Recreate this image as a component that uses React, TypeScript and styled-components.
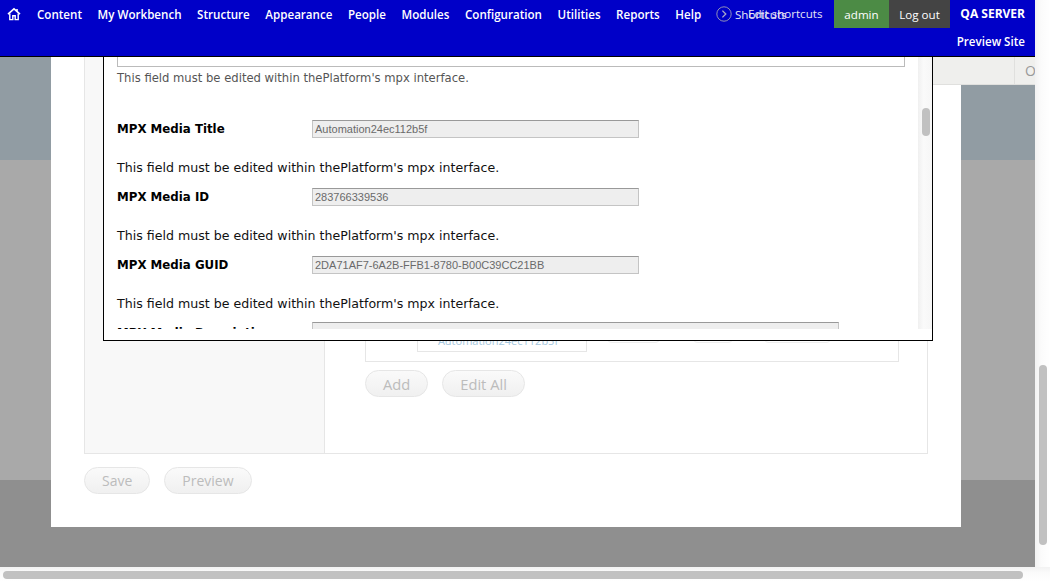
import styled, { createGlobalStyle } from 'styled-components';

const GlobalStyle = createGlobalStyle`
  html, body {
    margin: 0;
    padding: 0;
    height: 582px;
    overflow: hidden;
    background: #fff;
  }
`;

const NAV_ITEMS = [
  'Content',
  'My Workbench',
  'Structure',
  'Appearance',
  'People',
  'Modules',
  'Configuration',
  'Utilities',
  'Reports',
  'Help'
];

const MEDIA_FIELDS = [
  { label: 'MPX Media Title', value: 'Automation24ec112b5f' },
  { label: 'MPX Media ID', value: '283766339536' },
  { label: 'MPX Media GUID', value: '2DA71AF7-6A2B-FFB1-8780-B00C39CC21BB' }
];

const HELP_TEXT = "This field must be edited within thePlatform's mpx interface.";

function App() {
  return (
    <Frame>
      <GlobalStyle />
      <Main>
        <Viewport>
          <Toolbar>
            <HomeLink aria-label="Home">
              <svg width="14" height="14" viewBox="0 0 14 14" fill="none">
                <path d="M10 2v2.6" stroke="#fff" strokeWidth="1.6" />
                <path d="M1 7.2 7 1.8l6 5.4" stroke="#fff" strokeWidth="1.6" />
                <path d="M2.8 6.6V12.6H5.8V8.8H8.2V12.6H11.2V6.6" stroke="#fff" strokeWidth="1.4" />
              </svg>
            </HomeLink>
            <Nav>
              {NAV_ITEMS.map((item) => (
                <NavItem key={item}>{item}</NavItem>
              ))}
            </Nav>
            <Shortcuts>
              <svg width="16" height="16" viewBox="0 0 16 16" fill="none">
                <circle cx="8" cy="8" r="7.2" stroke="#8f8fb8" strokeWidth="1" />
                <path d="M6.4 4.6 9.8 8l-3.4 3.4" stroke="#a9a9c8" strokeWidth="1.3" />
              </svg>
              <ShortcutsLabel>Shortcuts</ShortcutsLabel>
              <EditShortcuts>Edit shortcuts</EditShortcuts>
            </Shortcuts>
            <UserBlock>
              <UserTab $bg="#4c8b45" $w={55}>admin</UserTab>
              <UserTab $bg="#444444" $w={61}>Log out</UserTab>
            </UserBlock>
            <ServerBlock>
              <ServerName>QA SERVER</ServerName>
              <PreviewSite>Preview Site</PreviewSite>
            </ServerBlock>
          </Toolbar>

          <Page>
            <Sheet>
              <TabStrip>
                <TabFiller />
                <TabLabel>O</TabLabel>
              </TabStrip>
              <FormPanel>
                <SideColumn />
                <MainColumn>
                  <ItemBox>
                    <ItemCard>Automation24ec112b5f</ItemCard>
                    <CardAction $w={55} $gap={19} />
                    <CardAction $w={42} $gap={31} />
                    <CardAction $w={69} $gap={29} />
                  </ItemBox>
                  <ButtonRow>
                    <PillButton $size={14.7}>Add</PillButton>
                    <PillButton $size={14.7}>Edit All</PillButton>
                  </ButtonRow>
                </MainColumn>
              </FormPanel>
              <FormActions>
                <PillButton>Save</PillButton>
                <PillButton>Preview</PillButton>
              </FormActions>
            </Sheet>
          </Page>

          <Modal>
            <ModalScroll>
              <ModalBody>
                <EmptyBox />
                <MutedHelp>{HELP_TEXT}</MutedHelp>
                {MEDIA_FIELDS.map((field) => (
                  <FieldBlock key={field.label}>
                    <FieldRow>
                      <FieldLabel>{field.label}</FieldLabel>
                      <ReadOnlyInput>{field.value}</ReadOnlyInput>
                    </FieldRow>
                    <HelpText>{HELP_TEXT}</HelpText>
                  </FieldBlock>
                ))}
                <LastFieldRow>
                  <DescriptionLabel>MPX Media Description</DescriptionLabel>
                  <ReadOnlyInput $wide />
                </LastFieldRow>
              </ModalBody>
              <ModalScrollbar>
                <ModalThumb />
              </ModalScrollbar>
            </ModalScroll>
          </Modal>
        </Viewport>

        <VerticalTrack>
          <VerticalThumb />
        </VerticalTrack>
      </Main>
      <HorizontalTrack>
        <HorizontalThumb />
      </HorizontalTrack>
    </Frame>
  );
}

export default App;

const Frame = styled.div`
  width: 1050px;
  height: 582px;
  display: flex;
  flex-direction: column;
  overflow: hidden;
`;

const Main = styled.div`
  flex: 1;
  min-height: 0;
  display: flex;
`;

const Viewport = styled.div`
  position: relative;
  width: 1035px;
  display: flex;
  flex-direction: column;
  overflow: hidden;
`;

const Toolbar = styled.header`
  position: relative;
  z-index: 3;
  height: 56px;
  flex: none;
  display: flex;
  align-items: flex-start;
  background: #0000c8;
  border-bottom: 1px solid #000;
  font-family: 'Open Sans', sans-serif;
  font-size: 11.6px;
  font-weight: 600;
  color: #fff;
`;

const HomeLink = styled.div`
  width: 37px;
  height: 28px;
  flex: none;
  display: flex;
  align-items: center;
  padding-left: 7px;
  box-sizing: border-box;
`;

const Nav = styled.nav`
  display: flex;
  gap: 15.55px;
  width: 664px;
  flex: none;
  height: 28px;
  align-items: center;
`;

const NavItem = styled.span`
  white-space: nowrap;
`;

const Shortcuts = styled.div`
  position: relative;
  margin-left: 15px;
  width: 118px;
  flex: none;
  height: 28px;
  display: flex;
  align-items: center;
  gap: 3px;
  font-weight: 400;
  color: #e4e4f4;
`;

const ShortcutsLabel = styled.span`
  white-space: nowrap;
`;

const EditShortcuts = styled.span`
  position: absolute;
  left: 32px;
  top: 6px;
  white-space: nowrap;
`;

const UserBlock = styled.div`
  display: flex;
  flex: none;
  font-weight: 400;
`;

const UserTab = styled.div<{ $bg: string; $w: number }>`
  width: ${(p) => p.$w}px;
  height: 28px;
  display: flex;
  align-items: center;
  justify-content: center;
  background: ${(p) => p.$bg};
`;

const ServerBlock = styled.div`
  flex: 1;
  height: 56px;
  padding-right: 10px;
  display: flex;
  flex-direction: column;
  align-items: flex-end;
  white-space: nowrap;
`;

const ServerName = styled.div`
  height: 28px;
  line-height: 28px;
  font-size: 12px;
  font-weight: 700;
`;

const PreviewSite = styled.div`
  height: 28px;
  line-height: 28px;
`;

const Page = styled.main`
  flex: 1;
  min-height: 0;
  background: linear-gradient(
    #919ca3 0,
    #919ca3 103px,
    #a9a9a9 103px,
    #a9a9a9 423px,
    #8f8f8f 423px
  );
`;

const Sheet = styled.div`
  position: relative;
  width: 910px;
  height: 470px;
  margin-left: 51px;
  background: #fff;
  padding-left: 33px;
  box-sizing: border-box;
`;

const TabStrip = styled.div`
  position: absolute;
  left: 882px;
  top: 0;
  width: 102px;
  height: 28px;
  display: flex;
  background: #efefed;
  border-bottom: 1px solid #e0e0de;
  box-sizing: border-box;
  overflow: hidden;
`;

const TabFiller = styled.div`
  width: 81px;
  flex: none;
  border-right: 1px solid #e0e0de;
`;

const TabLabel = styled.div`
  padding-left: 10px;
  font-family: 'Open Sans', sans-serif;
  font-size: 14px;
  line-height: 28px;
  color: #999;
`;

const FormPanel = styled.section`
  width: 844px;
  height: 397px;
  display: flex;
  border: 1px solid #e6e6e6;
  border-top: 0;
  box-sizing: border-box;
`;

const SideColumn = styled.div`
  width: 239px;
  flex: none;
  background: #f8f8f8;
  border-right: 1px solid #e6e6e6;
`;

const MainColumn = styled.div`
  flex: 1;
  padding: 0 28px 0 40px;
  display: flex;
  flex-direction: column;
`;

const ItemBox = styled.div`
  height: 305px;
  margin-top: -10px;
  flex: none;
  border: 1px solid #e6e6e6;
  border-top: 0;
  padding-left: 51px;
  display: flex;
  align-items: flex-end;
  padding-bottom: 9px;
`;

const ItemCard = styled.div`
  width: 170px;
  height: 32px;
  flex: none;
  box-sizing: border-box;
  padding-right: 8px;
  border: 1px solid #e6e6e6;
  display: flex;
  align-items: flex-end;
  justify-content: center;
  font-family: 'Open Sans', sans-serif;
  font-size: 11px;
  line-height: 20px;
  color: #a6c8e0;
`;

const CardAction = styled.div<{ $w: number; $gap: number }>`
  width: ${(p) => p.$w}px;
  height: 24px;
  flex: none;
  margin-left: ${(p) => p.$gap}px;
  margin-bottom: 9px;
  border: 1px solid #eeeeee;
  border-radius: 6px;
  box-sizing: border-box;
`;

const ButtonRow = styled.div`
  display: flex;
  gap: 14px;
  margin-top: 8px;
`;

const FormActions = styled.div`
  display: flex;
  gap: 14px;
  margin-top: 13px;
`;

const PillButton = styled.button<{ $size?: number }>`
  height: 27px;
  padding: 0 17px;
  border: 1px solid #e6e6e6;
  border-radius: 14px;
  background: linear-gradient(#fafafa, #f0f0f0);
  font-family: 'Open Sans', sans-serif;
  font-size: ${(p) => p.$size ?? 14}px;
  color: #bcbcbc;
`;

const Modal = styled.div`
  position: absolute;
  z-index: 2;
  left: 103px;
  top: 50px;
  width: 830px;
  height: 291px;
  box-sizing: border-box;
  padding-bottom: 11px;
  background: #fff;
  border: 1px solid #000;
`;

const ModalScroll = styled.div`
  height: 100%;
  display: flex;
  overflow: hidden;
`;

const ModalBody = styled.div`
  flex: 1;
  min-width: 0;
  padding: 0 0 0 13px;
  font-family: 'DejaVu Sans', sans-serif;
`;

const ModalScrollbar = styled.div`
  width: 14px;
  flex: none;
  padding: 57px 2px 0 4px;
  box-sizing: border-box;
  background: linear-gradient(to right, #f0f0f0, #fafafa 40%, #f6f6f6);
`;

const ModalThumb = styled.div`
  height: 28px;
  border-radius: 4px;
  background: #c1c1c1;
`;

const EmptyBox = styled.div`
  width: 788px;
  height: 16px;
  box-sizing: border-box;
  border: 1px solid #bbb;
  border-top: 0;
`;

const MutedHelp = styled.p`
  margin: 3px 0 34px;
  font-size: 11.6px;
  line-height: 16px;
  color: #555;
`;

const FieldBlock = styled.div`
  margin-bottom: 12px;
`;

const FieldRow = styled.div`
  display: flex;
  align-items: flex-start;
`;

const LastFieldRow = styled(FieldRow)`
  margin-top: -2px;
`;

const FieldLabel = styled.label`
  width: 195px;
  flex: none;
  padding-top: 1px;
  font-size: 11.8px;
  font-weight: 700;
  line-height: 17px;
  color: #000;
`;

const DescriptionLabel = styled(FieldLabel)`
  margin-top: 2px;
`;

const ReadOnlyInput = styled.div<{ $wide?: boolean }>`
  width: ${(p) => (p.$wide ? '527px' : '327px')};
  height: 18px;
  box-sizing: border-box;
  padding-left: 2px;
  background: #eeeeee;
  border: 1px solid #c4c4c4;
  border-top-color: #999;
  font-family: 'Liberation Sans', sans-serif;
  font-size: 11px;
  line-height: 16px;
  color: #6a6a6a;
`;

const HelpText = styled.p`
  margin: 21px 0 0;
  font-size: 12.6px;
  line-height: 17px;
  color: #111;
`;

const VerticalTrack = styled.div`
  width: 15px;
  flex: none;
  padding: 365px 3px 0 4px;
  box-sizing: border-box;
  background: linear-gradient(to right, #f2f2f2, #fbfbfb 40%, #fff);
`;

const VerticalThumb = styled.div`
  height: 180px;
  border-radius: 4px;
  background: #c1c1c1;
`;

const HorizontalTrack = styled.div`
  height: 15px;
  flex: none;
  padding: 4px 27px 3px 3px;
  box-sizing: border-box;
  background: linear-gradient(#f2f2f2, #fbfbfb 40%, #fff);
`;

const HorizontalThumb = styled.div`
  height: 8px;
  border-radius: 4px;
  background: #c1c1c1;
`;
